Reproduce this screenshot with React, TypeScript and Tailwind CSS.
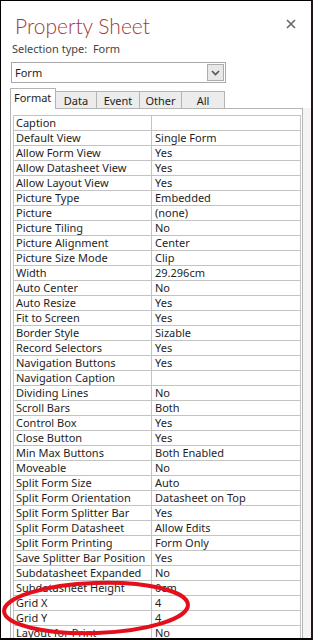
const rows: [string, string][] = [
  ['Caption', ''],
  ['Default View', 'Single Form'],
  ['Allow Form View', 'Yes'],
  ['Allow Datasheet View', 'Yes'],
  ['Allow Layout View', 'Yes'],
  ['Picture Type', 'Embedded'],
  ['Picture', '(none)'],
  ['Picture Tiling', 'No'],
  ['Picture Alignment', 'Center'],
  ['Picture Size Mode', 'Clip'],
  ['Width', '29.296cm'],
  ['Auto Center', 'No'],
  ['Auto Resize', 'Yes'],
  ['Fit to Screen', 'Yes'],
  ['Border Style', 'Sizable'],
  ['Record Selectors', 'Yes'],
  ['Navigation Buttons', 'Yes'],
  ['Navigation Caption', ''],
  ['Dividing Lines', 'No'],
  ['Scroll Bars', 'Both'],
  ['Control Box', 'Yes'],
  ['Close Button', 'Yes'],
  ['Min Max Buttons', 'Both Enabled'],
  ['Moveable', 'No'],
  ['Split Form Size', 'Auto'],
  ['Split Form Orientation', 'Datasheet on Top'],
  ['Split Form Splitter Bar', 'Yes'],
  ['Split Form Datasheet', 'Allow Edits'],
  ['Split Form Printing', 'Form Only'],
  ['Save Splitter Bar Position', 'Yes'],
  ['Subdatasheet Expanded', 'No'],
  ['Subdatasheet Height', '0cm'],
  ['Grid X', '4'],
  ['Grid Y', '4'],
  ['Layout for Print', 'No'],
];

const tabs = [
  { name: 'Format', w: 'w-[46px]' },
  { name: 'Data', w: 'w-[41px]' },
  { name: 'Event', w: 'w-[43px]' },
  { name: 'Other', w: 'w-[42px]' },
  { name: 'All', w: 'w-[43px]' },
];

export default function App() {
  return (
    <div className="relative w-[313px] h-[640px] overflow-hidden bg-white border-t border-l border-b-2 border-r-2 border-black border-r-[#2a1414] font-['Noto_Sans','Open_Sans',sans-serif] text-[#1e1e1e]">
      <div className="flex items-start justify-between">
        <h1 className="pl-[14px] pt-[12px] text-[21px] leading-[25px] font-light font-['Lato',sans-serif] text-[#a4373a]">
          Property Sheet
        </h1>
        <svg className="mt-[18px] mr-[15px]" width="10" height="10" viewBox="0 0 10 10">
          <path d="M1 1 L9 9 M9 1 L1 9" stroke="#666" strokeWidth="1.6" />
        </svg>
      </div>

      <div className="pl-[11px] pt-[3px] text-[11px] leading-[16px] text-[#444]">
        Selection type:&nbsp;&nbsp;Form
      </div>

      <div className="ml-[10px] mt-[5px] w-[215px] h-[21px] border border-[#a9a9a9] flex items-center justify-between pl-[3px] pr-[1px]">
        <span className="text-[11px] leading-[16px]">Form</span>
        <span className="w-[17px] h-[17px] border border-[#adadad] bg-[#e8e8e8] flex items-center justify-center">
          <svg width="9" height="6" viewBox="0 0 9 6">
            <path d="M1 1 L4.5 4.5 L8 1" fill="none" stroke="#555" strokeWidth="1.6" />
          </svg>
        </span>
      </div>

      <div className="ml-[9px] mt-[5px] flex items-end h-[20px]">
        {tabs.map((t, i) =>
          i === 0 ? (
            <div
              key={t.name}
              className={`${t.w} h-[21px] -mb-px z-10 bg-white border border-b-0 border-[#b4b4b4] text-[11px] leading-[18px] pl-[3px]`}
            >
              {t.name}
            </div>
          ) : (
            <div
              key={t.name}
              className={`${t.w} h-[17px] bg-[#ececec] border border-l-0 border-b-0 border-[#b4b4b4] text-[11px] leading-[17px] text-center`}
            >
              {t.name}
            </div>
          )
        )}
      </div>

      <div className="flex">
        <div className="ml-[9px] w-[293px] h-[540px] border border-b-0 border-[#b4b4b4] pt-[6px] pl-[2px] pr-[1px] bg-white">
          <div className="border-t border-l border-r border-[#c3c3c3]">
            {rows.map(([k, v]) => (
              <div key={k} className="grid grid-cols-[138px_1fr] h-[15px] border-b border-[#c3c3c3] text-[11px] leading-[14px]">
                <div className="pl-[2px] border-r border-[#c3c3c3] whitespace-nowrap overflow-hidden">{k}</div>
                <div className="pl-[3px] whitespace-nowrap overflow-hidden">{v}</div>
              </div>
            ))}
          </div>
        </div>
        <div className="flex-1 bg-[#f4f4f4]" />
      </div>

      <svg className="absolute left-0 top-[576px] pointer-events-none" width="200" height="64" viewBox="0 0 200 64">
        <ellipse cx="95" cy="31" rx="92" ry="25" transform="rotate(-2 95 31)" fill="none" stroke="#e3101c" strokeWidth="4" />
      </svg>
    </div>
  );
}
